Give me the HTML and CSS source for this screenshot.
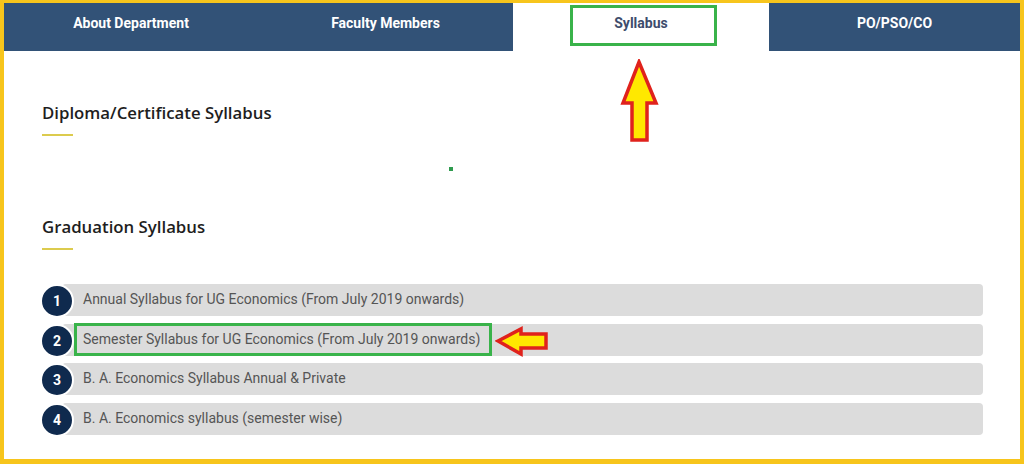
FILE: index.html
```html
<!DOCTYPE html>
<html>
<head>
<meta charset="utf-8">
<link rel="stylesheet" href="styles.css">
</head>
<body>
<div class="frame">
  <nav class="tabs">
    <div class="tab">About Department</div>
    <div class="tab">Faculty Members</div>
    <div class="tab active">Syllabus<span class="mark-tab"></span></div>
    <div class="tab">PO/PSO/CO</div>
  </nav>
  <svg class="arrow-up" width="40" height="84" viewBox="0 0 40 84">
    <polygon points="19,3 36,44 27,44 27,81 12,81 12,44 3,44" fill="#ffe800" stroke="#e0221c" stroke-width="3.5" stroke-linejoin="miter"/>
  </svg>
  <main class="content">
    <section class="block first">
      <h2 class="heading">Diploma/Certificate Syllabus</h2>
      <div class="rule"></div>
      <div class="dot"></div>
    </section>
    <section class="block second">
      <h2 class="heading">Graduation Syllabus</h2>
      <div class="rule"></div>
      <ol class="list">
        <li class="row"><span class="badge">1</span><span class="bar">Annual Syllabus for UG Economics (From July 2019 onwards)</span></li>
        <li class="row"><span class="badge">2</span><span class="bar">Semester Syllabus for UG Economics (From July 2019 onwards)</span><span class="mark-row"></span>
          <svg class="arrow-left" width="54" height="31" viewBox="0 0 54 31">
            <polygon points="3,15 26,3 26,8 51,8 51,22 26,22 26,28" fill="#ffe800" stroke="#e0221c" stroke-width="3.5"/>
          </svg>
        </li>
        <li class="row"><span class="badge">3</span><span class="bar">B. A. Economics Syllabus Annual &amp; Private</span></li>
        <li class="row"><span class="badge">4</span><span class="bar">B. A. Economics syllabus (semester wise)</span></li>
      </ol>
    </section>
  </main>
</div>
</body>
</html>
```
FILE: styles.css
```css
* { box-sizing: border-box; }
html, body { margin: 0; padding: 0; background: #fff; }
.frame {
  position: relative;
  width: 1024px;
  height: 464px;
  border-style: solid;
  border-color: #f7c51c;
  border-width: 3px 4px 5px 4px;
  background: #fff;
  overflow: hidden;
}
.tabs {
  display: grid;
  grid-template-columns: 254px 255px 256px 251px;
  height: 48px;
}
.tab {
  position: relative;
  background: #325277;
  color: #fff;
  font-family: Roboto, "Liberation Sans", sans-serif;
  font-weight: 700;
  font-size: 14px;
  line-height: 20px;
  padding-top: 10px;
  text-align: center;
}
.tab.active { background: #fff; color: #3d4c6c; }
.mark-tab {
  position: absolute;
  left: 57px;
  top: 2px;
  width: 147px;
  height: 41px;
  border: 3px solid #39b34a;
}
.arrow-up {
  position: absolute;
  left: 616px;
  top: 56px;
}
.content {
  padding: 0 37px 0 38px;
}
.heading {
  margin: 0;
  font-family: "Open Sans", sans-serif;
  font-weight: 600;
  font-size: 16.8px;
  line-height: 22px;
  color: #1e1e1e;
}
.block.first { padding-top: 51px; }
.block.second { padding-top: 45px; }
.rule {
  width: 31px;
  height: 2px;
  background: #dccb4e;
  margin-top: 10px;
}
.dot {
  width: 4px;
  height: 4px;
  background: #2e9b4e;
  margin: 31px 0 0 407px;
}
.list {
  list-style: none;
  margin: 34px 0 0 -2px;
  padding: 0;
  display: flex;
  flex-direction: column;
  gap: 7.7px;
}
.row {
  position: relative;
  display: flex;
  align-items: center;
  height: 32px;
}
.badge {
  position: relative;
  z-index: 1;
  flex: none;
  width: 34px;
  height: 34px;
  border-radius: 50%;
  border: 2px solid #fff;
  background: #0f2a4e;
  color: #fff;
  font-family: Roboto, "Liberation Sans", sans-serif;
  font-weight: 700;
  font-size: 14px;
  line-height: 30px;
  text-align: center;
  margin-right: -12px;
  margin-top: 2px;
}
.bar {
  flex: 1;
  height: 32px;
  background: #dcdcdc;
  border-radius: 4px;
  padding-left: 21px;
  font-family: Roboto, "Liberation Sans", sans-serif;
  font-size: 14px;
  line-height: 30px;
  color: #555;
}
.mark-row {
  position: absolute;
  left: 34px;
  top: -1px;
  width: 418px;
  height: 33px;
  border: 3px solid #39b34a;
}
.arrow-left {
  position: absolute;
  left: 455px;
  top: 2px;
}
```
